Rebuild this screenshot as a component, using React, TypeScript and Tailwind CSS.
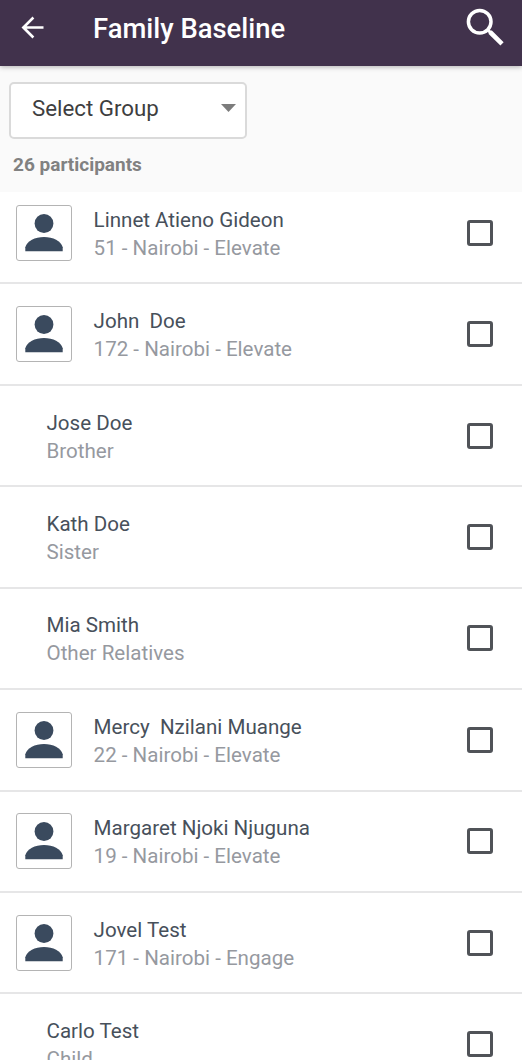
import React from 'react';

interface Participant {
  name: string;
  detail: string;
  relative?: boolean;
}

const participants: Participant[] = [
  { name: 'Linnet Atieno Gideon', detail: '51 - Nairobi - Elevate' },
  { name: 'John  Doe', detail: '172 - Nairobi - Elevate' },
  { name: 'Jose Doe', detail: 'Brother', relative: true },
  { name: 'Kath Doe', detail: 'Sister', relative: true },
  { name: 'Mia Smith', detail: 'Other Relatives', relative: true },
  { name: 'Mercy  Nzilani Muange', detail: '22 - Nairobi - Elevate' },
  { name: 'Margaret Njoki Njuguna', detail: '19 - Nairobi - Elevate' },
  { name: 'Jovel Test', detail: '171 - Nairobi - Engage' },
  { name: 'Carlo Test', detail: 'Child', relative: true },
];

const BackIcon = () => (
  <svg viewBox="0 0 24 24" className="w-[33px] h-[33px]" fill="currentColor">
    <path d="M20 11.1H7.7l5.6-5.7L12 4l-8 8 8 8 1.3-1.4-5.6-5.7H20z" />
  </svg>
);

const SearchIcon = () => (
  <svg viewBox="0 0 40 40" className="w-10 h-10" fill="none" stroke="currentColor">
    <circle cx="14.7" cy="14.7" r="11.3" strokeWidth="3.5" />
    <path d="M23.3 23.4l2.5 2.5" strokeWidth="3" />
    <path d="M25 25l12 11.8" strokeWidth="4.6" />
  </svg>
);

const PersonAvatar = () => (
  <div className="w-14 h-14 mr-[22px] shrink-0 rounded-[3px] border border-[#b4b4b4] bg-white text-[#3a4a5e]">
    <svg viewBox="0 0 56 56" className="w-14 h-14 -m-px" fill="currentColor">
      <circle cx="28" cy="18.5" r="9.4" />
      <path d="M9.3 46.2v-4C11 36 19 32 28 32s17 4 18.7 10.2v4z" />
    </svg>
  </div>
);

const ParticipantRow: React.FC<{ participant: Participant }> = ({ participant }) => (
  <li
    className={`flex items-center h-[101.43px] pr-[29px] border-b-2 border-[#e6e6e7] ${
      participant.relative ? 'pl-[46.5px]' : 'pl-[15.6px]'
    }`}
  >
    {!participant.relative && <PersonAvatar />}
    <div className="flex-1 pt-[2px] text-[20.57px] leading-7 whitespace-pre">
      <p className="text-[#47505b]">{participant.name}</p>
      <p className="text-[#96999f]">{participant.detail}</p>
    </div>
    <button
      aria-label={`Select ${participant.name}`}
      className="w-[26px] h-[26px] rounded-[3px] border-3 border-[#505358]"
    />
  </li>
);

const App: React.FC = () => {
  return (
    <div className="h-[1060px] flex flex-col overflow-hidden bg-white font-[Roboto,sans-serif]">
      {/* App bar */}
      <header className="relative h-[66px] shrink-0 flex items-start bg-[#41324c] text-white shadow-[0_1px_5px_rgba(0,0,0,0.3)]">
        <button className="mt-[11px] ml-[16px]" aria-label="Back">
          <BackIcon />
        </button>
        <h1 className="ml-11 mt-[11px] flex-1 text-[27.4px] leading-9 font-medium">Family Baseline</h1>
        <button className="mt-[7px] mr-[17px]" aria-label="Search">
          <SearchIcon />
        </button>
      </header>

      {/* Group filter */}
      <section className="h-[126px] shrink-0 bg-[#fafafa] pt-4 pl-[9px]">
        <button className="w-[238px] h-[57px] flex items-center justify-between pl-[21px] pr-[9px] rounded-[5px] border-2 border-[#dadada] bg-white text-[22.3px] text-[#3e3e40]">
          <span className="-mt-1">Select Group</span>
          <svg viewBox="0 0 15 8" className="w-[15px] h-2 -mt-1.5" fill="#7c7c7c">
            <path d="M0 0h15L7.5 8z" />
          </svg>
        </button>
        <p className="mt-3.5 ml-1 text-[19px] leading-6 font-bold text-[#818181]">26 participants</p>
      </section>

      {/* Participants, scrolled slightly under the filter */}
      <main className="flex-1 min-h-0 overflow-hidden">
        <ul className="-mt-[9px]">
          {participants.map((participant) => (
            <ParticipantRow key={participant.name} participant={participant} />
          ))}
        </ul>
      </main>
    </div>
  );
};

export default App;
